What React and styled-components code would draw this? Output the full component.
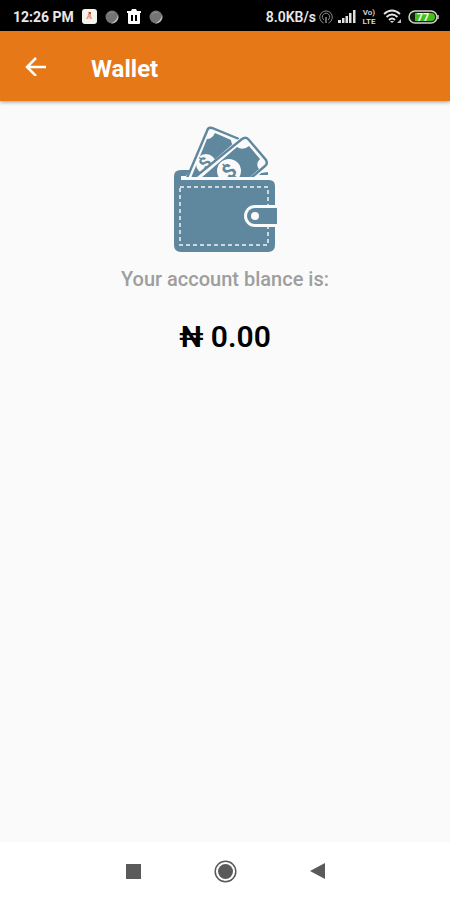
import React from 'react';
import styled, { createGlobalStyle } from 'styled-components';

const GlobalStyle = createGlobalStyle`
  * {
    box-sizing: border-box;
  }

  body {
    margin: 0;
    background: #fafafa;
    font-family: Roboto, 'Noto Sans', sans-serif;
  }
`;

const Screen = styled.div`
  display: flex;
  flex-direction: column;
  min-height: 100vh;
`;

const StatusBar = styled.div`
  display: flex;
  align-items: center;
  justify-content: space-between;
  height: 31px;
  padding: 2px 11px 0 13px;
  background: #000;
  color: #e8e8e8;
`;

const StatusGroup = styled.div`
  display: flex;
  align-items: center;
  gap: ${props => props.$gap};
`;

const StatusText = styled.span`
  font-size: 14px;
  font-weight: ${props => props.$weight};
  line-height: 16px;
  white-space: nowrap;
`;

const Icon = styled.svg`
  display: block;
  flex: none;
`;

const AppBar = styled.header`
  display: flex;
  align-items: center;
  gap: 31px;
  height: 70px;
  padding: 0 12px;
  background: #e67817;
  color: #fff;
  box-shadow: 0 1px 4px rgba(0, 0, 0, 0.4);
`;

const IconButton = styled.button`
  display: flex;
  align-items: center;
  justify-content: center;
  width: 48px;
  height: 48px;
  padding: 0;
  border: 0;
  background: none;
  color: inherit;
  cursor: pointer;
`;

const Title = styled.h1`
  margin: 0;
  padding-top: 6px;
  font-size: 24px;
  font-weight: 700;
  line-height: 32px;
`;

const Content = styled.main`
  display: flex;
  flex: 1;
  flex-direction: column;
  align-items: center;
  padding-top: 24px;
`;

const Label = styled.p`
  margin: 14px 0 0;
  color: #9e9e9e;
  font-size: 20px;
  font-weight: 500;
  line-height: 24px;
`;

const Balance = styled.p`
  margin: 28px 0 0;
  color: #000;
  font-size: 30px;
  font-weight: 600;
  line-height: 36px;
`;

const NavBar = styled.nav`
  display: flex;
  align-items: center;
  justify-content: center;
  gap: 44px;
  height: 58px;
  background: #fff;
  color: #5a5a5a;
`;

function StatusIcons() {
  return (
    <StatusGroup $gap="8px">
      <StatusText $weight="700">12:26 PM</StatusText>
      <Icon width="15" height="15" viewBox="0 0 15 15">
        <rect width="15" height="15" rx="3" fill="#f6f2f0" />
        <path d="M6 3h3v4l1 3H8l-1-2-1 2H4l2-4z" fill="#e3a184" />
        <path d="M7 3h2v2H7z" fill="#b5523a" />
      </Icon>
      <Dot />
      <Icon width="14" height="15" viewBox="0 0 14 15" fill="#fff">
        <path d="M0 2h4l1-2h4l1 2h4v2H0z" />
        <path
          fillRule="evenodd"
          d="M1 4h12v10q0 1-1 1H2q-1 0-1-1zM4 6v6h2V6zM8 6v6h2V6z"
        />
      </Icon>
      <Dot />
    </StatusGroup>
  );
}

function Dot() {
  return (
    <Icon width="14" height="14" viewBox="0 0 14 14">
      <circle cx="7" cy="7" r="6.5" fill="#747474" />
      <path d="M13 5a6.5 6.5 0 0 1-7 8.4Q12 11 13 5z" fill="#c4c4c4" />
      <path d="M3 4q3-3 6-1" stroke="#8f8f8f" fill="none" />
    </Icon>
  );
}

function SignalIcons() {
  return (
    <StatusGroup $gap="5px">
      <StatusGroup $gap="3px">
        <StatusText $weight="600">8.0KB/s</StatusText>
        <Icon
          width="14"
          height="14"
          viewBox="0 0 14 14"
          fill="none"
          stroke="#8c8c8c"
        >
          <path d="M4.5 13A6.3 6.3 0 1 1 9.5 13" />
          <path d="M5 10A3.7 3.7 0 1 1 9 10" />
          <path d="M7 7v6" strokeWidth="1.5" />
        </Icon>
      </StatusGroup>
      <Icon width="18" height="13" viewBox="0 0 18 13" fill="#e0e0e0">
        <rect x="0" y="10" width="3" height="3" />
        <rect x="4" y="8" width="2.5" height="5" />
        <rect x="7.5" y="6" width="2.5" height="7" />
        <rect x="11" y="3" width="2.5" height="10" />
        <rect x="15" y="0" width="2.5" height="13" />
      </Icon>
      <Icon
        width="17"
        height="16"
        viewBox="0 0 17 16"
        fill="#dcdcdc"
        fontFamily="Roboto, sans-serif"
        fontWeight="600"
        fontSize="8"
        textAnchor="middle"
      >
        <text x="8" y="6">Vo)</text>
        <text x="8" y="15">LTE</text>
      </Icon>
      <Icon
        width="20"
        height="15"
        viewBox="0 0 20 15"
        fill="none"
        stroke="#e4e4e4"
        strokeWidth="1.8"
      >
        <path d="M1 5q8-7 16 0M3.5 8q5.5-5 11 0M6 11q3-3 6 0" />
        <path d="M7 12l2 2 2-2z" fill="#e4e4e4" stroke="none" />
        <path d="M14 14l4-4v4z" fill="#bdbdbd" stroke="none" />
      </Icon>
      <Icon width="31" height="14" viewBox="0 0 31 14">
        <rect
          x="1"
          y="1"
          width="28"
          height="12"
          rx="6"
          fill="#10200a"
          stroke="#d2d2d2"
          strokeWidth="1.5"
        />
        <path d="M7 3h16a4 4 0 0 1 0 8H7z" fill="#45bd1d" />
        <path d="M30 5v4" stroke="#d2d2d2" strokeWidth="1.5" />
        <text
          x="15"
          y="11"
          fill="#f2fff0"
          fontFamily="Roboto, sans-serif"
          fontSize="11"
          fontWeight="700"
          textAnchor="middle"
        >
          77
        </text>
      </Icon>
    </StatusGroup>
  );
}

function Wallet() {
  return (
    <Icon
      width="104"
      height="128"
      viewBox="0 0 104 128"
      role="img"
      aria-label="Wallet"
      fill="#5f879d"
    >
      <clipPath id="pocket">
        <rect width="104" height="52" />
      </clipPath>
      <path d="M1 58V51q0-6 7-6h9l-4 6H8v4z" />
      <path d="M88 48l7-1v3h-9z" />

      {/* back note */}
      <g clipPath="url(#pocket)">
        <path
          d="M12 56L34 5q1-3 5-2l27 11 20 8-14 34z"
          fill="#fafafa"
        />
        <path
          d="M14 53L34 6q1-4 5-3L66 14"
          fill="none"
          stroke="#5f879d"
          strokeWidth="2.4"
        />
        <path d="M18 53L34 14q5 0 8-6l16 7q0 4 4 6L24 53z" />
        <circle cx="33" cy="39" r="10" fill="#fafafa" />
        <text
          x="32"
          y="44"
          transform="rotate(-50 32 38)"
          fontFamily="Roboto, sans-serif"
          fontSize="17"
          fontWeight="700"
          textAnchor="middle"
        >
          $
        </text>
      </g>

      {/* front note */}
      <g clipPath="url(#pocket)">
        <path
          d="M17 56L69 11q5-4 9 0l19 24q3 4-1 7L77 56z"
          fill="#fafafa"
        />
        <path
          d="M21 53L69 14q4-3 7 1l17 20q2 4-1 6L78 53"
          fill="none"
          stroke="#5f879d"
          strokeWidth="2.4"
        />
        <path d="M28 53L64 22q6 4 12-1l11 13q-5 5-1 10L76 53z" />
        <circle cx="56" cy="46" r="12" fill="#fafafa" />
        <text
          x="56"
          y="53"
          transform="rotate(-45 56 46)"
          fontFamily="Roboto, sans-serif"
          fontSize="20"
          fontWeight="700"
          textAnchor="middle"
        >
          $
        </text>
      </g>

      <path d="M1 51q1 4 5 4h90q6 0 6 6v59q0 7-7 7H8q-7 0-7-7z" />
      <rect
        x="7"
        y="62"
        width="88"
        height="58"
        fill="none"
        stroke="#cbd9e0"
        strokeWidth="2"
        strokeDasharray="4 3"
      />
      <path d="M104 80H82a11 11 0 0 0 0 22h22z" fill="#fafafa" />
      <path d="M104 83H82a8 8 0 0 0 0 16h22z" />
      <circle cx="82" cy="91" r="4" fill="#fafafa" />
    </Icon>
  );
}

function App() {
  return (
    <Screen>
      <GlobalStyle />
      <StatusBar>
        <StatusIcons />
        <SignalIcons />
      </StatusBar>

      <AppBar>
        <IconButton aria-label="Back">
          <Icon
            width="22"
            height="20"
            viewBox="0 0 22 20"
            fill="none"
            stroke="currentColor"
            strokeWidth="2.5"
          >
            <path d="M21 11H3M11 2l-9 9 9 9" />
          </Icon>
        </IconButton>
        <Title>Wallet</Title>
      </AppBar>

      <Content>
        <Wallet />
        <Label>Your account blance is:</Label>
        <Balance>₦ 0.00</Balance>
      </Content>

      <NavBar>
        <IconButton aria-label="Recent apps">
          <Icon width="15" height="15" viewBox="0 0 15 15" fill="currentColor">
            <rect width="15" height="15" />
          </Icon>
        </IconButton>
        <IconButton aria-label="Home">
          <Icon width="23" height="23" viewBox="0 0 23 23" fill="currentColor">
            <circle
              cx="11.5"
              cy="11.5"
              r="10.3"
              fill="none"
              stroke="currentColor"
              strokeWidth="1.5"
            />
            <circle cx="11.5" cy="11.5" r="7.5" />
          </Icon>
        </IconButton>
        <IconButton aria-label="Go back">
          <Icon width="15" height="16" viewBox="0 0 15 16" fill="currentColor">
            <path d="M15 0v16L0 8z" />
          </Icon>
        </IconButton>
      </NavBar>
    </Screen>
  );
}

export default App;
